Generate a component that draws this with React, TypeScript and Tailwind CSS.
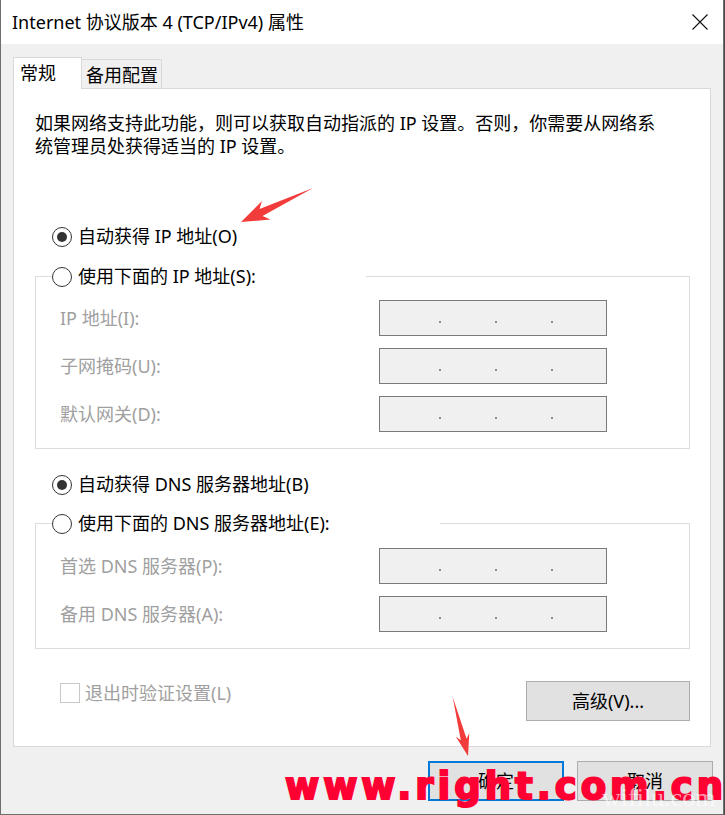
import React from "react";

const font = "[font-family:'Noto_Sans','Noto_Sans_CJK_SC',sans-serif]";

function Radio({ checked }: { checked?: boolean }) {
  return (
    <span className="flex h-[20px] w-[20px] shrink-0 items-center justify-center rounded-full border border-[#333333] bg-white">
      {checked && <span className="h-[10px] w-[10px] rounded-full bg-[#333333]" />}
    </span>
  );
}

function IpBox() {
  return (
    <div className="flex h-[36px] w-[228px] shrink-0 items-start border border-[#7a7a7a] bg-[#f0f0f0] pl-[59px] pt-[20px]">
      <span className="h-[2px] w-[2px] bg-[#a08a7c]" />
      <span className="ml-[54px] h-[2px] w-[2px] bg-[#a08a7c]" />
      <span className="ml-[54px] h-[2px] w-[2px] bg-[#a08a7c]" />
    </div>
  );
}

function FieldRow({ label }: { label: string }) {
  return (
    <div className="flex h-[36px] items-center">
      <span className="w-[319px] whitespace-nowrap leading-[25px] text-[#a0a0a0]">{label}</span>
      <IpBox />
    </div>
  );
}

function RadioRow({ checked, label }: { checked?: boolean; label: string }) {
  return (
    <div className="flex h-[25px] items-center gap-[6px]">
      <Radio checked={checked} />
      <span className="whitespace-nowrap leading-[25px] text-black">{label}</span>
    </div>
  );
}

export default function App() {
  return (
    <div className={`relative h-[815px] w-[725px] overflow-hidden bg-[#4a4a4a] text-[18px] ${font}`}>
      <div className="flex h-[815px] w-[724px] flex-col border-x border-b border-[#6e6e6e] bg-[#f0f0f0]">
        {/* Title bar */}
        <div className="flex h-[44px] shrink-0 items-center justify-between bg-white pl-[11px] pr-[15px]">
          <span className="whitespace-nowrap leading-none text-black">Internet 协议版本 4 (TCP/IPv4) 属性</span>
          <svg width="16" height="16" viewBox="0 0 16 16" className="shrink-0">
            <path d="M0.5 0.5 L15.5 15.5 M15.5 0.5 L0.5 15.5" stroke="#111" strokeWidth="1.1" fill="none" />
          </svg>
        </div>

        {/* Body */}
        <div className="flex flex-col pl-[12px] pt-[13px]">
          {/* Tabs */}
          <div className="flex items-end">
            <div className="relative z-10 -mb-px flex h-[32px] w-[69px] items-start border border-b-0 border-[#d9d9d9] bg-white pl-[6px] pt-[3px]">
              <span className="leading-[25px] text-black">常规</span>
            </div>
            <div className="flex h-[29px] w-[80px] items-start border border-b-0 border-l-0 border-[#d9d9d9] bg-[#f0f0f0] pl-[4px] pt-[3px]">
              <span className="whitespace-nowrap leading-[25px] text-black">备用配置</span>
            </div>
          </div>

          {/* Panel */}
          <div className="flex h-[659px] w-[698px] flex-col border border-[#d9d9d9] bg-white">
            <p className="whitespace-nowrap pl-[21px] pt-[23px] leading-[23px] text-black">
              如果网络支持此功能，则可以获取自动指派的 IP 设置。否则，你需要从网络系
              <br />
              统管理员处获得适当的 IP 设置。
            </p>

            <div className="ml-[38px] mt-[66px]">
              <RadioRow checked label="自动获得 IP 地址(O)" />
            </div>

            <fieldset className="ml-[21px] mt-[15px] w-[655px] border border-[#dcdcdc] pb-[16px]">
              <legend className="ml-[16px] h-[25px] w-[314px] bg-white">
                <RadioRow label="使用下面的 IP 地址(S):" />
              </legend>
              <div className="flex flex-col gap-[12px] pl-[24px] pt-[11px]">
                <FieldRow label="IP 地址(I):" />
                <FieldRow label="子网掩码(U):" />
                <FieldRow label="默认网关(D):" />
              </div>
            </fieldset>

            <div className="ml-[38px] mt-[23px]">
              <RadioRow checked label="自动获得 DNS 服务器地址(B)" />
            </div>

            <fieldset className="ml-[21px] mt-[14px] w-[655px] border border-[#dcdcdc] pb-[16px]">
              <legend className="ml-[16px] h-[25px] w-[388px] bg-white">
                <RadioRow label="使用下面的 DNS 服务器地址(E):" />
              </legend>
              <div className="flex flex-col gap-[12px] pl-[24px] pt-[12px]">
                <FieldRow label="首选 DNS 服务器(P):" />
                <FieldRow label="备用 DNS 服务器(A):" />
              </div>
            </fieldset>

            <div className="mt-[32px] flex items-start justify-between pl-[46px] pr-[20px]">
              <div className="mt-[2px] flex h-[20px] items-center gap-[5px]">
                <span className="h-[20px] w-[20px] shrink-0 border border-[#c8c8c8] bg-white" />
                <span className="whitespace-nowrap leading-[25px] text-[#a0a0a0]">退出时验证设置(L)</span>
              </div>
              <div className="flex h-[40px] w-[164px] items-center justify-center border border-[#adadad] bg-[#e1e1e1]">
                <span className="whitespace-nowrap leading-[25px] text-black">高级(V)...</span>
              </div>
            </div>
          </div>
        </div>

        {/* Footer buttons */}
        <div className="flex justify-end gap-[13px] pr-[10px] pt-[14px]">
          <div className="flex h-[40px] w-[136px] items-center justify-center border-2 border-[#0078d7] bg-[#e1e1e1]">
            <span className="leading-[25px] text-black">确定</span>
          </div>
          <div className="flex h-[40px] w-[136px] items-center justify-center border border-[#adadad] bg-[#e1e1e1]">
            <span className="leading-[25px] text-black">取消</span>
          </div>
        </div>
      </div>

      {/* Red annotation arrows */}
      <svg className="pointer-events-none absolute left-0 top-0" width="725" height="815" viewBox="0 0 725 815">
        <polygon points="241,222 262,201 259.5,209 313,188 262.5,216 270.5,219.5" fill="#f23c3c" />
        <polygon points="468,756 455.7,736.5 460.8,740.3 452.7,697 466.6,738.8 469.3,732.9" fill="#f23c3c" />
      </svg>

      {/* Watermarks */}
      <span className="pointer-events-none absolute left-[285px] top-[768px] whitespace-nowrap text-[37px] font-bold leading-none tracking-[4px] text-[#ff0033] [font-family:'DejaVu_Sans',sans-serif] [-webkit-text-stroke:2px_#ff0033]">
        www.right.com.cn
      </span>
      <span className="pointer-events-none absolute left-[602px] top-[785px] whitespace-nowrap text-[26px] leading-none text-white/60 [font-family:'Liberation_Serif',serif]">
        wifilu.com
      </span>
    </div>
  );
}
